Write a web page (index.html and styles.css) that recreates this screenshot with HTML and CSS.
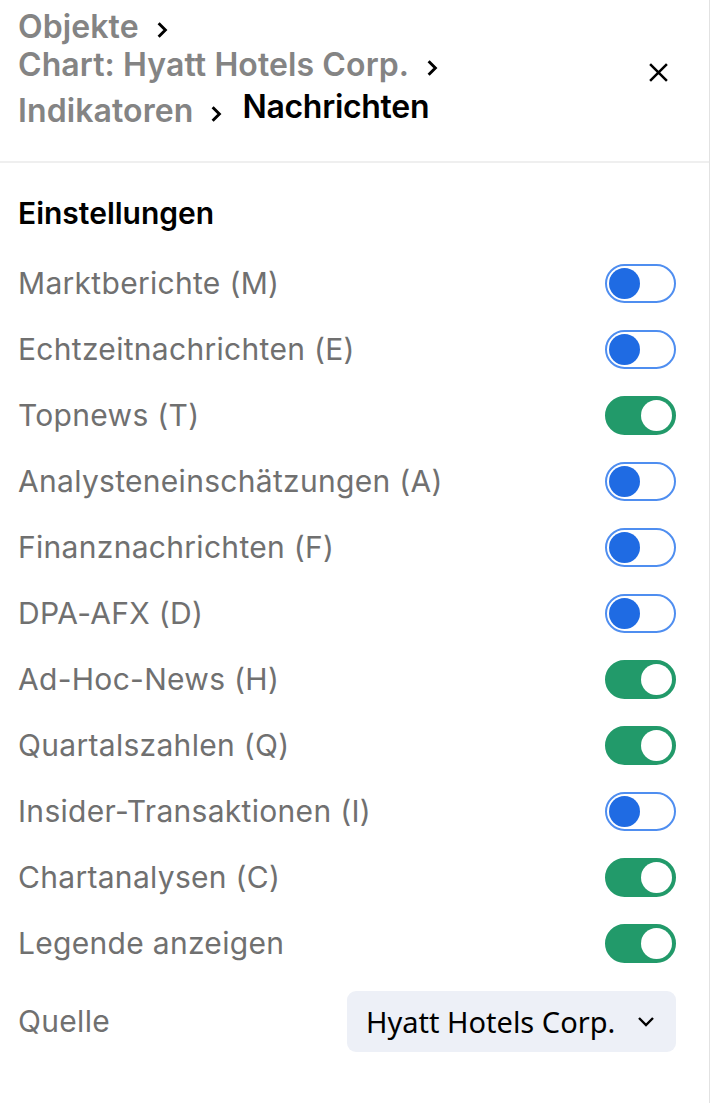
FILE: index.html
```html
<!DOCTYPE html>
<html lang="de">
<head>
<meta charset="utf-8">
<title>Nachrichten</title>
<link rel="stylesheet" href="styles.css">
</head>
<body>
<div class="panel">
  <header class="header">
    <nav class="crumbs">
      <span class="crumb">Objekte<svg class="chev" viewBox="0 0 10 16"><path d="M2 2l6 6-6 6"/></svg></span>
      <span class="crumb">Chart: Hyatt Hotels Corp.<svg class="chev" viewBox="0 0 10 16"><path d="M2 2l6 6-6 6"/></svg></span>
      <span class="crumb">Indikatoren<svg class="chev" viewBox="0 0 10 16"><path d="M2 2l6 6-6 6"/></svg></span>
      <span class="crumb current">Nachrichten</span>
    </nav>
    <button class="close" aria-label="Schließen"><svg viewBox="0 0 20 20"><path d="M2 2l16 16M18 2L2 18"/></svg></button>
  </header>
  <section class="settings">
    <h2 class="title">Einstellungen</h2>
    <div class="row"><span class="label">Marktberichte (M)</span><span class="toggle"></span></div>
    <div class="row"><span class="label">Echtzeitnachrichten (E)</span><span class="toggle"></span></div>
    <div class="row"><span class="label">Topnews (T)</span><span class="toggle on"></span></div>
    <div class="row"><span class="label">Analysteneinschätzungen (A)</span><span class="toggle"></span></div>
    <div class="row"><span class="label">Finanznachrichten (F)</span><span class="toggle"></span></div>
    <div class="row"><span class="label">DPA-AFX (D)</span><span class="toggle"></span></div>
    <div class="row"><span class="label">Ad-Hoc-News (H)</span><span class="toggle on"></span></div>
    <div class="row"><span class="label">Quartalszahlen (Q)</span><span class="toggle on"></span></div>
    <div class="row"><span class="label">Insider-Transaktionen (I)</span><span class="toggle"></span></div>
    <div class="row"><span class="label">Chartanalysen (C)</span><span class="toggle on"></span></div>
    <div class="row"><span class="label">Legende anzeigen</span><span class="toggle on"></span></div>
    <div class="row source"><span class="label">Quelle</span>
      <div class="select">Hyatt Hotels Corp.<svg class="down" viewBox="0 0 20 12"><path d="M3 2l7 7 7-7"/></svg></div>
    </div>
  </section>
</div>
</body>
</html>
```

FILE: styles.css
```css
* { box-sizing: border-box; }
html, body { margin: 0; padding: 0; background: #fff; }
body { font-family: Inter, "Noto Sans", sans-serif; }
.panel {
  width: 710px;
  min-height: 1103px;
  border-right: 1px solid #e2e2e2;
}
.header {
  display: flex;
  align-items: flex-start;
  padding: 8px 18px 31px 18px;
  border-bottom: 2px solid #efefef;
}
.crumbs {
  display: flex;
  flex-wrap: wrap;
  column-gap: 20px;
  max-width: 520px;
  flex: 1;
  align-items: flex-end;
}
.crumb {
  font-size: 32px;
  font-weight: 600;
  color: #848484;
  line-height: 38px;
  display: inline-flex;
  align-items: center;
  white-space: nowrap;
  letter-spacing: 0.1px;
}
.crumb.current {
  color: #000;
  line-height: 46px;
  letter-spacing: -0.3px;
}
.chev {
  width: 12px;
  height: 18px;
  margin-left: 17px;
  margin-top: 6px;
  fill: none;
  stroke: #000;
  stroke-width: 2.6;
}
.close {
  margin-left: auto;
  margin-top: 53px;
  margin-right: 21px;
  width: 22px;
  height: 22px;
  padding: 0;
  border: 0;
  background: none;
}
.close svg {
  width: 21px;
  height: 21px;
  fill: none;
  stroke: #000;
  stroke-width: 2.4;
  display: block;
}
.settings {
  padding: 31px 33px 0 18px;
}
.title {
  margin: 0 0 18px 0;
  font-size: 30px;
  line-height: 38px;
  font-weight: 600;
  color: #000;
}
.row {
  height: 66px;
  display: flex;
  align-items: center;
  justify-content: space-between;
}
.label {
  font-size: 30px;
  color: #707070;
  font-weight: 400;
  letter-spacing: 0.3px;
}
.toggle {
  width: 71px;
  height: 39px;
  border: 2px solid #4f8ef0;
  border-radius: 20px;
  background: #fff;
  position: relative;
  flex: none;
}
.toggle::after {
  content: "";
  position: absolute;
  left: 2px;
  top: 2px;
  width: 31px;
  height: 31px;
  border-radius: 50%;
  background: #1f6be3;
}
.toggle.on {
  background: #229a6a;
  border-color: #229a6a;
}
.toggle.on::after {
  left: auto;
  right: 2px;
  background: #fff;
}
.row.source {
  height: 76px;
  padding-top: 15px;
  align-items: flex-start;
}
.row.source .label {
  line-height: 61px;
}
.select {
  width: 329px;
  height: 61px;
  background: #edf0f7;
  border-radius: 9px;
  display: flex;
  align-items: center;
  padding: 0 20px 0 19px;
  justify-content: space-between;
  font-family: "Noto Sans", sans-serif;
  font-size: 29px;
  color: #000;
}
.down {
  width: 20px;
  height: 12px;
  fill: none;
  stroke: #000;
  stroke-width: 2.4;
}
```
